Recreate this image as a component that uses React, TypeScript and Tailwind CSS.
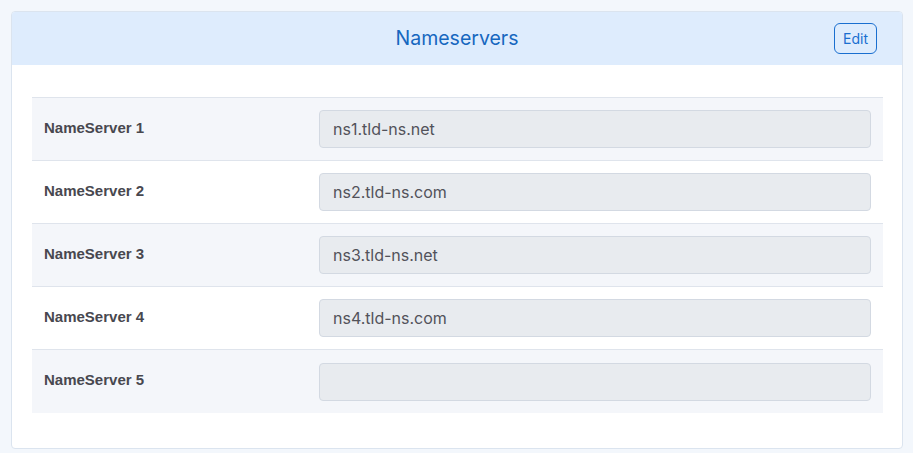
import React from 'react';

const nameservers = [
  { label: 'NameServer 1', value: 'ns1.tld-ns.net' },
  { label: 'NameServer 2', value: 'ns2.tld-ns.com' },
  { label: 'NameServer 3', value: 'ns3.tld-ns.net' },
  { label: 'NameServer 4', value: 'ns4.tld-ns.com' },
  { label: 'NameServer 5', value: '' },
];

const App: React.FC = () => {
  return (
    <div className="min-h-[453px] bg-[#f3f7fc] p-[11px] pr-[10px] font-['Inter',sans-serif]">
      <div className="bg-white border border-[#dbe4ef] rounded-[4px] overflow-hidden">
        {/* Header */}
        <div className="relative h-[53px] bg-[#deecfd] flex items-center justify-center">
          <h2 className="text-[19.5px] text-[#1667bf] leading-none">Nameservers</h2>
          <button className="absolute right-[25px] top-[11px] h-[31px] px-[8px] border border-[#1a6fd0] rounded-[6px] text-[14px] text-[#1a6fd0] leading-none">
            Edit
          </button>
        </div>

        {/* Body */}
        <div className="pl-[20px] pr-[19px] pt-[32px] pb-[35px]">
          <div className="border-t border-[#dfe4ec]">
            {nameservers.map((ns, index) => (
              <div
                key={ns.label}
                className={`flex items-center h-[63px] px-[12px] ${index % 2 === 0 ? 'bg-[#f4f6fa]' : 'bg-white'} ${index < nameservers.length - 1 ? 'border-b border-[#dfe4ec]' : ''}`}
              >
                <div className="w-[275px] shrink-0 pb-[2px] font-['Liberation_Sans',sans-serif] font-bold text-[15px] text-[#48484f]">
                  {ns.label}
                </div>
                <div className="flex-1 h-[38px] flex items-center px-[13px] bg-[#e8ebef] border border-[#d3d9e2] rounded-[4px] text-[16px] text-[#52525a]">
                  {ns.value}
                </div>
              </div>
            ))}
          </div>
        </div>
      </div>
    </div>
  );
};

export default App;
